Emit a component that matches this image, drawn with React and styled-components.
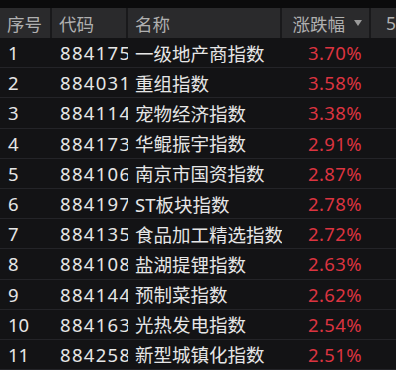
import React from 'react'
import styled, { createGlobalStyle } from 'styled-components'

const Global = createGlobalStyle`
  html, body {
    margin: 0;
    padding: 0;
    background: #131315;
  }
  body {
    font-family: "Noto Sans", "Noto Sans CJK SC", sans-serif;
    overflow: hidden;
  }
`

const cols = '52px 76px 154px 89px 1fr'

const Board = styled.div`
  width: 396px;
  height: 370px;
  background: #131315;
  box-sizing: border-box;
  border-top: 8px solid #0b0b0c;
`

const HeadRow = styled.div`
  display: grid;
  grid-template-columns: ${cols};
  height: 30px;
  background: #2a2a2c;
  color: #b0b0b0;
  font-size: 17.5px;
`

const HeadCell = styled.div`
  display: flex;
  align-items: center;
  justify-content: ${p => (p.$right ? 'flex-end' : 'flex-start')};
  padding: ${p => (p.$right ? '0 7px 0 0' : `0 0 0 ${p.$pad || 7}px`)};
  border-right: 2px solid #19191b;
  white-space: nowrap;
  overflow: hidden;
  &:last-child {
    border-right: none;
  }
`

const Caret = styled.span`
  display: inline-block;
  width: 0;
  height: 0;
  margin-left: 9px;
  border-left: 4.5px solid transparent;
  border-right: 4.5px solid transparent;
  border-top: 6px solid #9a9a9a;
`

const Row = styled.div`
  display: grid;
  grid-template-columns: ${cols};
  height: 30.2px;
  box-sizing: border-box;
  border-bottom: 1px solid #242428;
  color: #e6e6e6;
  font-size: 18.5px;
`

const Cell = styled.div`
  display: flex;
  align-items: center;
  padding-left: ${p => p.$pad || 7}px;
  letter-spacing: ${p => p.$spread || 0}px;
  white-space: nowrap;
  overflow: hidden;
`

const Pct = styled.div`
  display: flex;
  align-items: center;
  justify-content: flex-end;
  padding-right: 9px;
  color: #dc3440;
  letter-spacing: 0.4px;
  white-space: nowrap;
`

const rows = [
  ['1', '8841754', '一级地产商指数', '3.70%'],
  ['2', '8840311', '重组指数', '3.58%'],
  ['3', '8841147', '宠物经济指数', '3.38%'],
  ['4', '8841731', '华鲲振宇指数', '2.91%'],
  ['5', '8841064', '南京市国资指数', '2.87%'],
  ['6', '884197', 'ST板块指数', '2.78%'],
  ['7', '8841350', '食品加工精选指数', '2.72%'],
  ['8', '8841082', '盐湖提锂指数', '2.63%'],
  ['9', '884144', '预制菜指数', '2.62%'],
  ['10', '8841637', '光热发电指数', '2.54%'],
  ['11', '884258', '新型城镇化指数', '2.51%'],
]

const App = () => {
  return (
    <>
      <Global />
      <Board>
        <HeadRow>
          <HeadCell>序号</HeadCell>
          <HeadCell>代码</HeadCell>
          <HeadCell>名称</HeadCell>
          <HeadCell $right>
            涨跌幅
            <Caret />
          </HeadCell>
          <HeadCell $pad={15}>5</HeadCell>
        </HeadRow>
        {rows.map(r => (
          <Row key={r[0]}>
            <Cell $pad={8}>{r[0]}</Cell>
            <Cell $pad={8} $spread={1.3}>{r[1]}</Cell>
            <Cell>{r[2]}</Cell>
            <Pct>{r[3]}</Pct>
            <Cell />
          </Row>
        ))}
      </Board>
    </>
  )
}

export default App
